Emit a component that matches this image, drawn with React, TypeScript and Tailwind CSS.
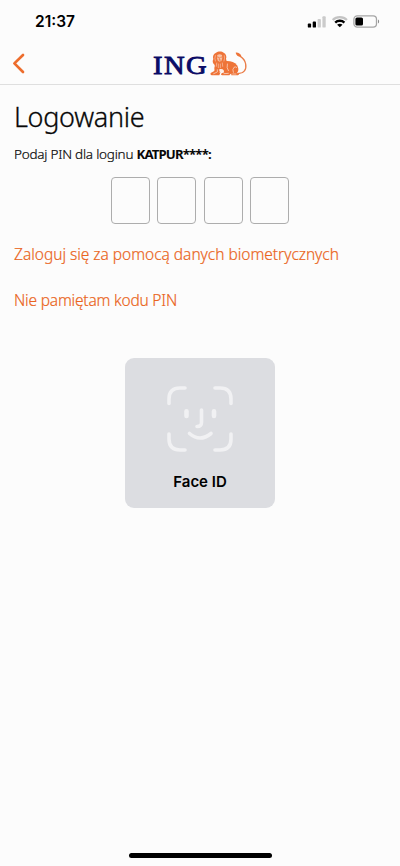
import { useState } from 'react';

const PIN_LENGTH = 4;

function StatusBar() {
  return (
    <div className="flex h-11 items-center justify-between pl-[35px] pr-[20px]">
      <span className="font-['Inter',sans-serif] text-[15.5px] font-semibold leading-none text-black">21:37</span>
      <div className="mt-[-1px] flex items-center">
        <svg width="19" height="12" viewBox="0 0 19 12">
          <rect x="0.8" y="7.6" width="3.3" height="4" rx="0.9" fill="#000" />
          <rect x="5.7" y="5.6" width="3.3" height="6" rx="0.9" fill="#000" />
          <rect x="10.6" y="3" width="3.3" height="8.6" rx="0.9" fill="#cbcbcb" />
          <rect x="15.4" y="0.3" width="3.3" height="11.3" rx="0.9" fill="#cbcbcb" />
        </svg>
        <svg className="ml-[5px]" width="17" height="13" viewBox="0 0 17 13">
          <path d="M1.7 4.9C5.4 1.1 12.2 1.1 15.9 4.9" fill="none" stroke="#c4c4c4" strokeWidth="2.2" />
          <path d="M4.2 7.6C6.7 5.2 10.9 5.2 13.4 7.6" fill="none" stroke="#000" strokeWidth="2.4" />
          <path d="M6.1 9.7C7.6 8.4 10 8.4 11.5 9.7L8.8 12.3Z" fill="#000" />
        </svg>
        <svg className="ml-[5px]" width="27" height="13" viewBox="0 0 27 13">
          <rect x="0.9" y="0.9" width="22.6" height="11.2" rx="3.4" fill="none" stroke="#a5a5a5" strokeWidth="1.3" />
          <rect x="2.4" y="2.4" width="7.6" height="8.2" rx="1.6" fill="#000" />
          <path d="M25 4.5C26.5 5.2 26.5 7.8 25 8.5Z" fill="#8c8c8c" />
        </svg>
      </div>
    </div>
  );
}

function Lion() {
  return (
    <svg width="41" height="29" viewBox="0 0 123 87" fill="none" strokeLinecap="round" strokeLinejoin="round">
      {/* body and haunch */}
      <path d="M52 36C66 35 80 38 87 49C93 59 92 68 86 73L50 76L44 56Z" fill="#ee7438" />
      {/* tail with its tuft */}
      <path d="M90 73C108 75 116 61 113 45C111 33 105 27 97 22" stroke="#ea7d48" strokeWidth="4" />
      <path d="M98 24C90 23 84 18 83 11C91 10 97 15 100 21Z" fill="#ee7438" />
      {/* mane */}
      <path d="M24 11C30 6 42 6 47 11C54 14 57 23 54 30C58 38 54 47 49 52L47 65L37 60L26 66L20 60L20 48C13 43 13 35 16 30C13 22 17 14 24 11Z" fill="#ee7438" />
      {/* paws */}
      <path d="M20 54L19 66L8 72C6 76 9 79 14 79H34L38 68L30 60Z" fill="#ee7438" />
      <path d="M47 56L55 68L42 72C38 74 38 79 43 79H64L70 72Z" fill="#ee7438" />
      <path d="M70 72L86 71L93 75C93 78 90 79 87 79H70Z" fill="#ee7438" />
      {/* face and fur */}
      <path d="M28 18Q35 13 42 18L43 27L40 37Q35 41 30 37L27 27Z" fill="#f8c3a6" />
      <g stroke="#e8682b" strokeWidth="2">
        <path d="M28 24L32 25M38 25L42 24M34 26V33H37" />
        <path d="M31 37Q35 35 39 37" />
      </g>
      <g stroke="#fbdccd" strokeWidth="1.6">
        <path d="M22 20Q19 28 22 36M49 20Q51 28 48 36" />
        <path d="M26 42L25 52M31 45V56M37 45V56M43 42L44 52" />
        <path d="M58 45Q55 57 61 65M76 70Q72 61 78 55Q82 52 86 55" strokeWidth="2.2" />
        <path d="M28 62L28 69L17 74M48 74L61 73M74 75H84" strokeWidth="2.2" />
      </g>
      <path d="M37 60L34 71L41 69L48 66L44 61Z" fill="#fcefe8" />
    </svg>
  );
}

function Header() {
  return (
    <header className="flex h-[41px] items-start justify-between border-b border-[#dfdfdf] px-3">
      <button aria-label="Wstecz" className="mt-[9px]">
        <svg width="13" height="21" viewBox="0 0 13 21" fill="none">
          <path d="M11 2L2.4 10.4L11 19" stroke="#ed6d2d" strokeWidth="2.7" strokeLinecap="round" strokeLinejoin="round" />
        </svg>
      </button>
      <div className="flex items-start">
        <span className="mt-[9px] w-[55px] origin-left scale-x-[1.1] font-['Liberation_Serif',serif] text-[26px] leading-[26px] tracking-[1.3px] text-[#0b0b66] [-webkit-text-stroke:0.8px]">
          ING
        </span>
        <div className="mt-[5px]">
          <Lion />
        </div>
      </div>
      <div className="w-[12px]" />
    </header>
  );
}

function FaceIdCard() {
  return (
    <div className="mx-auto mt-[47px] flex h-[150px] w-[150px] flex-col items-center rounded-[9px] bg-[#dcdde1]">
      <svg className="mt-[27px]" width="68" height="68" viewBox="0 0 68 68" fill="none" stroke="#f1f1f3" strokeLinecap="round">
        <g strokeWidth="3.6">
          <path d="M3 18.5V14Q3 3 14 3H19" />
          <path d="M49 3H54Q65 3 65 14V18.5" />
          <path d="M65 49V54Q65 65 54 65H49" />
          <path d="M19 65H14Q3 65 3 54V49" />
          <path d="M35.5 25V37.5Q35.5 41.5 31 41.5" />
          <path d="M23.5 48.5Q34 57.5 45 48.5" />
        </g>
        <path d="M20.5 26.2V31M48 26.2V31" strokeWidth="4.6" />
      </svg>
      <span className="mt-[18px] font-['Inter',sans-serif] text-[15px] font-semibold leading-[22px] text-black">Face ID</span>
    </div>
  );
}

export default function App() {
  const [pin, setPin] = useState<string[]>(Array(PIN_LENGTH).fill(''));

  function updateDigit(index: number, value: string) {
    setPin(pin.map((digit, i) => (i === index ? value.slice(-1) : digit)));
  }

  return (
    <div className="flex h-[866px] w-[400px] flex-col overflow-hidden bg-[#fcfcfc] font-['Noto_Sans',sans-serif] text-[#080808]">
      <StatusBar />
      <Header />

      <main className="flex flex-1 flex-col items-start px-[14px]">
        <h1 className="mt-[13px] text-[27px] font-light leading-[38px] tracking-[-0.3px] [-webkit-text-stroke:0.3px]">Logowanie</h1>
        <p className="mt-[8px] whitespace-nowrap text-[13.5px] leading-[20px]">
          <span className="font-light tracking-[-0.23px] [-webkit-text-stroke:0.2px]">Podaj PIN dla loginu </span>
          <b className="text-[13.2px] font-bold tracking-[-0.85px]">KATPUR****:</b>
        </p>

        <div className="mx-auto mt-[13px] flex gap-[7.5px]">
          {pin.map((digit, i) => (
            <input
              key={i}
              type="password"
              inputMode="numeric"
              value={digit}
              onChange={(e) => updateDigit(i, e.target.value)}
              className="h-[47px] w-[39px] rounded-[4px] border border-[#adadad] text-center text-xl"
            />
          ))}
        </div>

        <a className="mt-[19px] whitespace-nowrap text-[15.5px] font-light leading-[22px] tracking-[-0.02px] text-[#ea6420] [-webkit-text-stroke:0.2px]">
          Zaloguj się za pomocą danych biometrycznych
        </a>
        <a className="mt-[24px] whitespace-nowrap text-[15.5px] font-light leading-[22px] tracking-[-0.2px] text-[#ea6420] [-webkit-text-stroke:0.2px]">
          Nie pamiętam kodu PIN
        </a>

        <FaceIdCard />
      </main>

      <div className="mx-auto mb-[8px] h-[5px] w-[143px] rounded-full bg-black" />
    </div>
  );
}
